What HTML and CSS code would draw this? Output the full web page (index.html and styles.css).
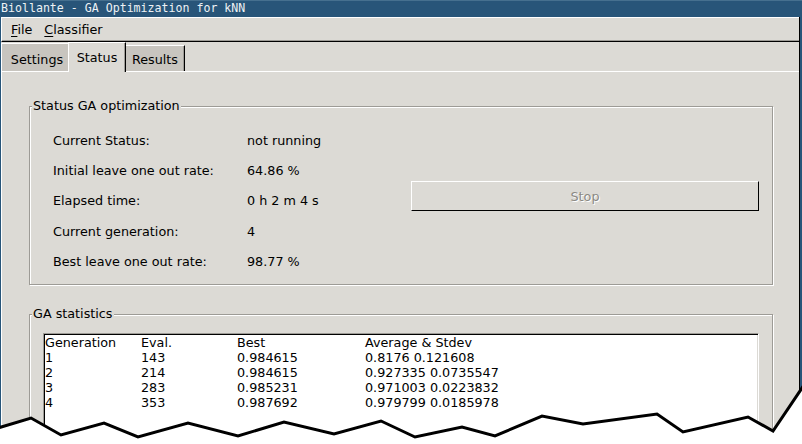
FILE: index.html
```html
<!DOCTYPE html>
<html>
<head>
<meta charset="utf-8">
<title>Biollante - GA Optimization for kNN</title>
<link rel="stylesheet" href="styles.css">
</head>
<body>
<div class="titlebar">Biollante - GA Optimization for kNN</div>
<div class="window">
  <div class="menubar">
    <span class="menu"><u>F</u>ile</span>
    <span class="menu"><u>C</u>lassifier</span>
  </div>
  <div class="tabbar">
    <div class="tab tab-settings">Settings</div>
    <div class="tab tab-active">Status</div>
    <div class="tab tab-results">Results</div>
  </div>
  <div class="panel">
    <div class="group group-status">
      <div class="group-title">Status GA optimization</div>
      <div class="status-grid">
        <div class="lbl">Current Status:</div><div class="val">not running</div>
        <div class="lbl">Initial leave one out rate:</div><div class="val">64.86 %</div>
        <div class="lbl">Elapsed time:</div><div class="val">0 h 2 m 4 s</div>
        <div class="lbl">Current generation:</div><div class="val">4</div>
        <div class="lbl">Best leave one out rate:</div><div class="val">98.77 %</div>
        <button class="btn-stop" disabled>Stop</button>
      </div>
    </div>
    <div class="group group-stats">
      <div class="group-title">GA statistics</div>
      <div class="listbox">
        <div class="lrow"><span>Generation</span><span>Eval.</span><span>Best</span><span>Average &amp; Stdev</span></div>
        <div class="lrow"><span>1</span><span>143</span><span>0.984615</span><span>0.8176 0.121608</span></div>
        <div class="lrow"><span>2</span><span>214</span><span>0.984615</span><span>0.927335 0.0735547</span></div>
        <div class="lrow"><span>3</span><span>283</span><span>0.985231</span><span>0.971003 0.0223832</span></div>
        <div class="lrow"><span>4</span><span>353</span><span>0.987692</span><span>0.979799 0.0185978</span></div>
      </div>
    </div>
  </div>
</div>
<svg class="torn" width="802" height="59" viewBox="0 385 802 59">
  <polygon fill="#fff" points="0,428 31,418 61,435 104,423 138,437 188,423 238,436 284,422 334,434 381,421 415,437 462,427 495,436 542,416 583,424 657,414 683,432 748,417 773,431 802,387 802,444 0,444"/>
  <polyline fill="none" stroke="#000" stroke-width="3" stroke-linejoin="miter" points="-2,428 31,418 61,435 104,423 138,437 188,423 238,436 284,422 334,434 381,421 415,437 462,427 495,436 542,416 583,424 657,414 683,432 748,417 773,431 804,385"/>
</svg>
</body>
</html>
```

FILE: styles.css
```css
html, body {
  margin: 0;
  padding: 0;
}
body {
  width: 802px;
  height: 444px;
  overflow: hidden;
  position: relative;
  background: #285579;
  font-family: "DejaVu Sans", "Liberation Sans", sans-serif;
  font-size: 12.75px;
  color: #000;
}
.titlebar {
  height: 17px;
  line-height: 17px;
  padding-left: 1px;
  background: #285579;
  box-shadow: inset 0 1px 0 #46708f;
  color: #eef2f5;
  font-family: "DejaVu Sans Mono", "Liberation Mono", monospace;
  font-size: 11.6px;
  white-space: nowrap;
}
.window {
  margin: 0 2px 0 1px;
  height: 427px;
  background: #dcdad5;
  border-right: 1px solid #000;
  display: flex;
  flex-direction: column;
}
.menubar {
  height: 23px;
  border-top: 1px solid #fff;
  border-left: 1px solid #fff;
  border-bottom: 1px solid #000;
  box-shadow: inset 0 -1px 0 #9d9b96;
  display: flex;
  align-items: center;
  gap: 12px;
  padding-left: 9px;
}
.menu u {
  text-decoration-thickness: 1px;
  text-underline-offset: 2px;
}
.tabbar {
  height: 29px;
  display: flex;
  align-items: flex-end;
}
.tab {
  box-sizing: border-box;
  display: flex;
  align-items: center;
  justify-content: center;
  background: #c8c5bf;
}
.tab-settings {
  width: 67px;
  height: 28px;
  border-top: 1px solid #fff;
  border-left: 1px solid #fff;
  padding-left: 4px;
  padding-top: 3px;
}
.tab-active {
  width: 58px;
  height: 30px;
  margin-bottom: -1px;
  position: relative;
  z-index: 1;
  background: #dcdad5;
  border-top: 1px solid #fff;
  border-left: 1px solid #fff;
  border-right: 1px solid #000;
  box-shadow: inset -1px 0 0 #9d9b96;
  padding-bottom: 1px;
}
.tab-results {
  width: 59px;
  height: 26px;
  border-top: 1px solid #fff;
  border-right: 1px solid #000;
  box-shadow: inset -1px 0 0 #9d9b96;
  padding-top: 1px;
}
.panel {
  flex: 1;
  border-top: 1px solid #fff;
  border-left: 1px solid #fff;
  padding: 34px 0 0 27px;
  overflow: hidden;
}
.group {
  box-sizing: border-box;
  width: 744px;
  border: 1px solid #9d9b96;
  box-shadow: inset 1px 1px 0 #fff, 1px 1px 0 #fff;
}
.group-title {
  width: fit-content;
  margin: -9px 0 0 2px;
  padding: 0 1px;
  line-height: 15px;
  background: #dcdad5;
}
.group-status {
  height: 179px;
}
.status-grid {
  margin: 13px 0 0 23px;
  display: grid;
  grid-template-columns: 194px 164px 348px;
  grid-template-rows: repeat(5, 30.2px);
  line-height: 30px;
}
.lbl, .val {
  white-space: nowrap;
}
.btn-stop {
  grid-column: 3;
  grid-row: 1 / span 5;
  align-self: start;
  margin-top: 55px;
  height: 30px;
  box-sizing: border-box;
  border: 1px solid;
  border-color: #fff #000 #000 #fff;
  background: #dcdad5;
  font-family: "DejaVu Sans", "Liberation Sans", sans-serif;
  font-size: 12.75px;
  color: #8b8984;
  text-shadow: 1px 1px 0 #fff;
  padding: 0;
}
.group-stats {
  margin-top: 29px;
  height: 200px;
}
.listbox {
  margin: 12px 0 0 13px;
  box-sizing: border-box;
  width: 716px;
  height: 120px;
  background: #fff;
  border: 1px solid;
  border-color: #9d9b96 #fff #fff #9d9b96;
  box-shadow: inset 1px 1px 0 #000, inset -1px -1px 0 #dcdad5;
  padding: 1px 0 0 1px;
}
.lrow {
  display: grid;
  grid-template-columns: 96px 96px 128px 1fr;
  line-height: 15px;
  white-space: nowrap;
}
.torn {
  position: absolute;
  left: 0;
  top: 385px;
  display: block;
}
```
